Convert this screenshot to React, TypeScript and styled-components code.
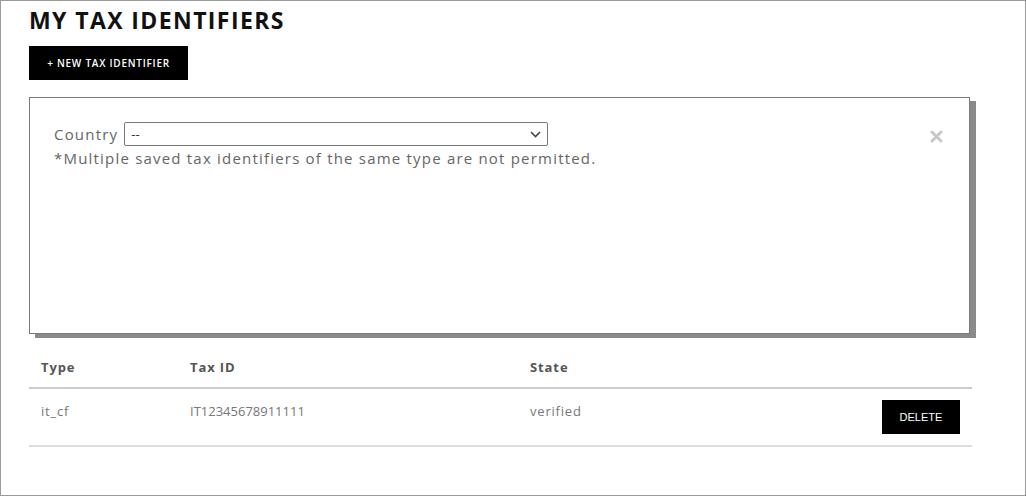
import React from "react";
import styled, { createGlobalStyle } from "styled-components";

const GlobalStyle = createGlobalStyle`
  html, body { margin: 0; padding: 0; background: #fff; }
  body { font-family: "Open Sans", "Liberation Sans", sans-serif; }
  * { box-sizing: border-box; }
`;

const Frame = styled.div`
  width: 1026px;
  height: 496px;
  border: 1px solid #9a9a9a;
  padding: 5px 0 0 28px;
  overflow: hidden;
`;

const Title = styled.h1`
  margin: 0;
  font-family: "Open Sans", sans-serif;
  font-weight: 700;
  font-size: 23px;
  line-height: 28px;
  letter-spacing: 1.4px;
  color: #111;
`;

const PrimaryButton = styled.button`
  display: flex;
  align-items: center;
  justify-content: center;
  margin-top: 12px;
  width: 159px;
  height: 34px;
  border: none;
  background: #000;
  color: #fff;
  font-family: "Open Sans", sans-serif;
  font-weight: 600;
  font-size: 10px;
  letter-spacing: 0.75px;
  padding: 0;
`;

const Panel = styled.section`
  display: flex;
  margin-top: 17px;
  width: 941px;
  height: 237px;
  border: 1px solid #7a7a7a;
  box-shadow: 6px 4px 0 #8a8a8a;
  padding: 24px 26px 24px 24px;
  background: #fff;
`;

const PanelBody = styled.div`
  flex: 1;
  display: flex;
  flex-direction: column;
  color: #666;
  font-size: 15px;
  line-height: 24px;
  letter-spacing: 1.2px;
`;

const FieldRow = styled.div`
  display: flex;
  align-items: center;
  gap: 6px;
`;

const SelectBox = styled.div`
  display: flex;
  align-items: center;
  width: 424px;
  height: 24px;
  border: 1px solid #767676;
  border-radius: 2px;
  padding: 0 6px;
  font-size: 13px;
  letter-spacing: 0;
  color: #333;
`;

const Chevron = styled.svg`
  margin-left: auto;
`;

const Note = styled.div``;

const CloseButton = styled.button`
  margin-top: 8px;
  width: 13px;
  height: 13px;
  padding: 0;
  border: none;
  background: transparent;
  display: flex;
`;

const Table = styled.div`
  margin-top: 13px;
  width: 943px;
  display: grid;
  grid-template-columns: 149px 340px 1fr auto;
`;

const HeadCell = styled.div`
  height: 42px;
  display: flex;
  align-items: center;
  padding-left: 12px;
  font-weight: 700;
  font-size: 13px;
  letter-spacing: 0.9px;
  color: #555;
  border-bottom: 2px solid #cccccc;
`;

const Cell = styled.div<{ $spacing?: number }>`
  height: 58px;
  padding: 12px 0 0 12px;
  line-height: 20px;
  font-size: 13px;
  letter-spacing: ${(p) => p.$spacing ?? 0.8}px;
  color: #777;
  border-bottom: 2px solid #dddddd;
`;

const ActionCell = styled(Cell)`
  display: flex;
  justify-content: flex-end;
  padding: 11px 12px 0 0;
`;

const DeleteButton = styled.button`
  width: 78px;
  height: 34px;
  border: none;
  background: #000;
  color: #fff;
  font-family: "Liberation Sans", Arial, sans-serif;
  font-size: 11px;
  letter-spacing: 0;
  padding: 0;
`;

export default function App() {
  return (
    <>
      <GlobalStyle />
      <Frame>
        <Title>MY TAX IDENTIFIERS</Title>
        <PrimaryButton>+ NEW TAX IDENTIFIER</PrimaryButton>
        <Panel>
          <PanelBody>
            <FieldRow>
              <span>Country</span>
              <SelectBox>
                <span>--</span>
                <Chevron width="11" height="7" viewBox="0 0 11 7">
                  <path d="M1 1 L5.5 5.5 L10 1" fill="none" stroke="#444" strokeWidth="1.6" />
                </Chevron>
              </SelectBox>
            </FieldRow>
            <Note>*Multiple saved tax identifiers of the same type are not permitted.</Note>
          </PanelBody>
          <CloseButton aria-label="close">
            <svg width="13" height="13" viewBox="0 0 13 13">
              <path d="M2 2 L11 11 M11 2 L2 11" stroke="#c8c8c8" strokeWidth="3" strokeLinecap="round" />
            </svg>
          </CloseButton>
        </Panel>
        <Table>
          <HeadCell>Type</HeadCell>
          <HeadCell>Tax ID</HeadCell>
          <HeadCell>State</HeadCell>
          <HeadCell />
          <Cell>it_cf</Cell>
          <Cell $spacing={0}>IT12345678911111</Cell>
          <Cell>verified</Cell>
          <ActionCell>
            <DeleteButton>DELETE</DeleteButton>
          </ActionCell>
        </Table>
      </Frame>
    </>
  );
}
